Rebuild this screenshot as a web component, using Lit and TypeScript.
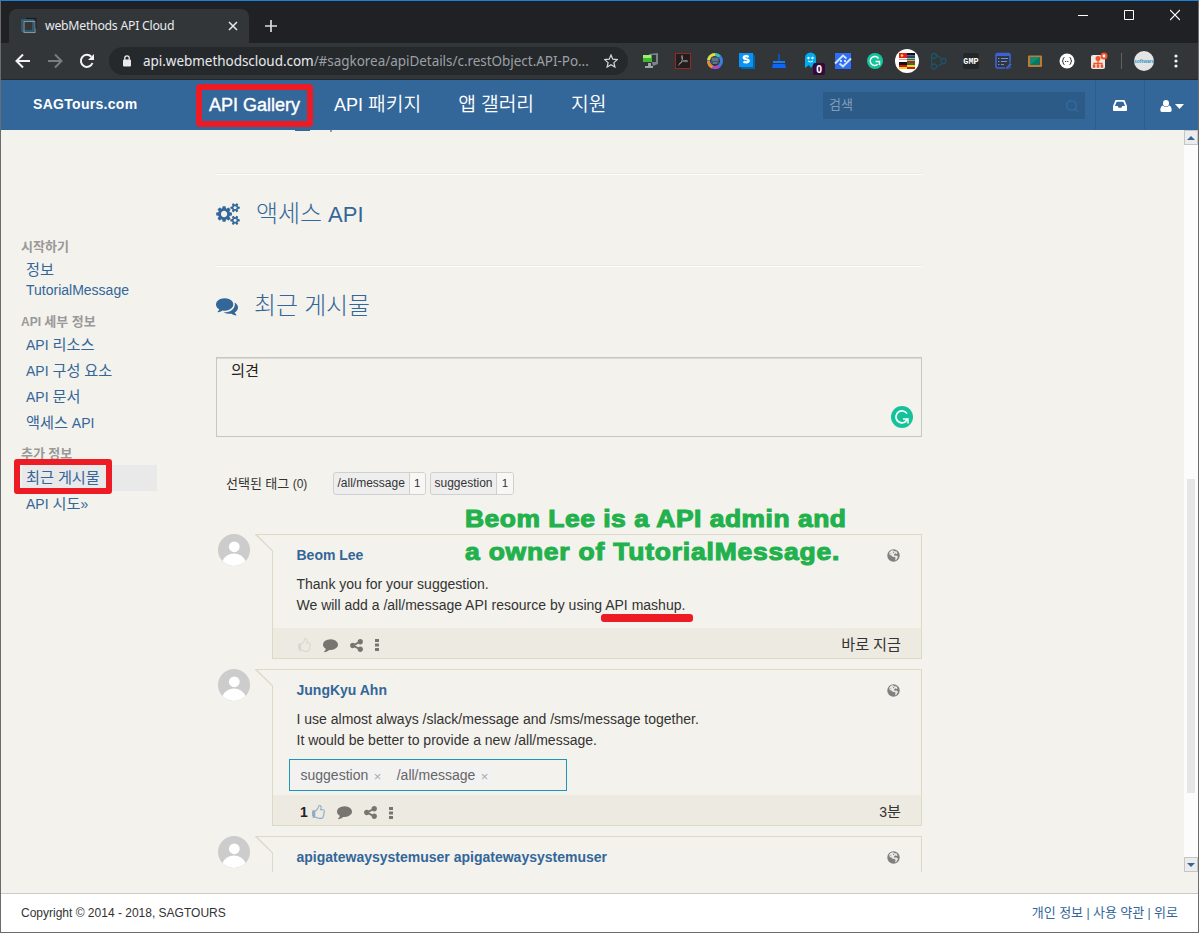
import { LitElement, html, svg, css, nothing } from "lit";
import { customElement, property } from "lit/decorators.js";

// Hangul runs get their own span so they can be sized independently of the Latin face.
const t = (s: string) =>
  s.split(/([\uac00-\ud7a3]+)/).map((p) => (/[\uac00-\ud7a3]/.test(p) ? html`<span class="k">${p}</span>` : p));

const shared = css`
  * { box-sizing: border-box; }
  svg { display: block; flex: none; }
  .k { font-family: "Noto Sans CJK KR", sans-serif; font-size: 1.087em; line-height: 0; }
`;

const FA = {
  cogs: "M896 896q0-106-75-181t-181-75-181 75-75 181 75 181 181 75 181-75 75-181zm768 512q0-52-38-90t-90-38-90 38-38 90q0 53 37.5 90.5t90.5 37.5 90.5-37.5 37.5-90.5zm0-1024q0-52-38-90t-90-38-90 38-38 90q0 53 37.5 90.5t90.5 37.5 90.5-37.5 37.5-90.5zm-384 421v185q0 10-7 19.5t-16 10.5l-155 24q-11 35-32 76 34 48 90 115 7 11 7 20 0 12-7 19-23 30-82.5 89.5t-78.5 59.5q-11 0-21-7l-115-90q-37 19-77 31-11 108-23 155-7 24-30 24h-186q-11 0-20-7.5t-10-17.5l-23-153q-34-10-75-31l-118 89q-7 7-20 7-11 0-21-8-144-133-144-160 0-9 7-19 10-14 41-53t47-61q-23-44-35-82l-152-24q-10-1-17-9.5t-7-19.5v-185q0-10 7-19.5t16-10.5l155-24q11-35 32-76-34-48-90-115-7-11-7-20 0-12 7-20 22-30 82-89t79-59q11 0 21 7l115 90q34-18 77-32 11-108 23-154 7-24 30-24h186q11 0 20 7.5t10 17.5l23 153q34 10 75 31l118-89q8-7 20-7 11 0 21 8 144 133 144 160 0 8-7 19-12 16-42 54t-45 60q23 48 34 82l152 23q10 2 17 10.5t7 19.5zm640 533v140q0 16-149 31-12 27-30 52 51 113 51 138 0 4-4 7-122 71-124 71-8 0-46-47t-52-68q-20 2-30 2t-30-2q-14 21-52 68t-46 47q-2 0-124-71-4-3-4-7 0-25 51-138-18-25-30-52-149-15-149-31v-140q0-16 149-31 13-29 30-52-51-113-51-138 0-4 4-7 4-2 35-20t59-34 30-16q8 0 46 46.5t52 67.5q20-2 30-2t30 2q51-71 92-112l6-2q4 0 124 70 4 3 4 7 0 25-51 138 17 23 30 52 149 15 149 31zm0-1024v140q0 16-149 31-12 27-30 52 51 113 51 138 0 4-4 7-122 71-124 71-8 0-46-47t-52-68q-20 2-30 2t-30-2q-14 21-52 68t-46 47q-2 0-124-71-4-3-4-7 0-25 51-138-18-25-30-52-149-15-149-31v-140q0-16 149-31 13-29 30-52-51-113-51-138 0-4 4-7 4-2 35-20t59-34 30-16q8 0 46 46.5t52 67.5q20-2 30-2t30 2q51-71 92-112l6-2q4 0 124 70 4 3 4 7 0 25-51 138 17 23 30 52 149 15 149 31z",
  comments: "M1408 768q0 139-94 257t-256.5 186.5-353.5 68.5q-86 0-176-16-124 88-278 128-36 9-86 16h-3q-11 0-20.5-8t-11.5-21q-1-3-1-6.5t.5-6.5 2-6l2.5-5 3.5-5.5 4-5 4.5-5 4-4.5q5-6 23-25t26-29.5 22.5-29 25-38.5 20.5-44q-124-72-195-177t-71-224q0-139 94-257t256.5-186.5 353.5-68.5 353.5 68.5 256.5 186.5 94 257zm384 256q0 120-71 224.5t-195 176.5q10 24 20.5 44t25 38.5 22.5 29 26 29.5 23 25q1 1 4 4.5t4.5 5 4 5 3.5 5.5l2.5 5 2 6 .5 6.5-1 6.5q-3 14-13 22t-22 7q-50-7-86-16-154-40-278-128-90 16-176 16-271 0-472-132 58 4 88 4 161 0 309-45t264-129q125-92 192-212t67-254q0-77-23-152 129 71 204 178t75 230z",
  comment: "M1792 896q0 174-120 321.5t-326 233-450 85.5q-70 0-145-8-198 175-460 242-49 14-114 22-17 2-30.5-9t-17.5-29v-1q-3-4-.5-12t2-10 4.5-9.5l6-9 7-8.5 8-9q7-8 31-34.5t34.5-38 31-39.5 32.5-51 27-59 26-76q-157-89-247.5-220t-90.5-281q0-130 71-248.5t191-204.5 286-136.5 348-50.5q244 0 450 85.5t326 233 120 321.5z",
  share: "M1344 1024q133 0 226.5 93.5t93.5 226.5-93.5 226.5-226.5 93.5-226.5-93.5-93.5-226.5q0-12 2-34l-360-180q-92 86-218 86-133 0-226.5-93.5t-93.5-226.5 93.5-226.5 226.5-93.5q126 0 218 86l360-180q-2-22-2-34 0-133 93.5-226.5t226.5-93.5 226.5 93.5 93.5 226.5-93.5 226.5-226.5 93.5q-126 0-218-86l-360 180q2 22 2 34t-2 34l360 180q92-86 218-86z",
  thumb: "M256 1408q0-26-19-45t-45-19-45 19-19 45 19 45 45 19 45-19 19-45zm1280-640q0-51-39-89.5t-89-38.5h-352q0-58 48-159.5t48-160.5q0-98-32-145t-128-47q-26 26-38 85t-30.5 125.5-59.5 109.5q-22 23-77 91-4 5-23 30t-31.5 41-34.5 42.5-40 44-38.5 35.5-40 27-35.5 9h-32v640h32q13 0 31.5 3t33 6.5 38 11 35 11.5 35.5 12.5 29 10.5q211 73 342 73h121q192 0 192-167 0-26-5-56 30-16 47.5-52.5t17.5-73.5-18-69q53-50 53-119 0-25-10-55.5t-25-47.5q32-1 53.5-47t21.5-81zm128-1q0 89-49 163 9 33 9 69 0 77-38 144 3 21 3 43 0 101-60 178 1 139-85 219.5t-227 80.5h-129q-96 0-189.5-22.5t-216.5-65.5q-116-40-138-40h-288q-53 0-90.5-37.5t-37.5-90.5v-640q0-53 37.5-90.5t90.5-37.5h274q36-24 137-155 58-75 107-128 24-25 35.5-85.5t30.5-126.5 62-108q39-37 90-37 84 0 151 32.5t102 101.5 35 186q0 93-48 192h176q104 0 180 76t76 179z",
};
const fa = (name: keyof typeof FA, w: number, h: number, fill: string, vb = "0 0 1792 1792") =>
  html`<svg width=${w} height=${h} viewBox=${vb} fill=${fill}><path d=${FA[name]}></path></svg>`;

const grammarly = (s: number) => html`<svg width=${s} height=${s} viewBox="0 0 22 22">
  <circle cx="11" cy="11" r="11" fill="#15c39a"></circle>
  <path d="M16 7.6A6 6 0 1 0 15 15.3" fill="none" stroke="#fff" stroke-width="1.7"></path>
  <path d="M12 13h5v4.500" fill="none" stroke="#fff" stroke-width="1.5"></path>
  <path d="M16.5 13.400l-2.500 2.500" stroke="#fff" stroke-width="1.5"></path></svg>`;

const extensions = [
  svg`<path d="M10 5l9-1v11l-5 2z" fill="#78838a"/><path d="M12 6h5v7h-5z" fill="#30373a"/><path d="M4 6h9v7H4z" fill="#41b92b"/><path d="M4 6h8v3H4z" fill="#9cef7d"/><path d="M9 14h3v3h2v2H6v-2h3z" fill="#9aa9ae"/>`,
  svg`<rect x="4.5" y="4.500" width="15" height="15" fill="#241d1e" stroke="#95291f"/><path d="M7 16.500c2-1 5-5 4.500-9 0-2-1.500-1-1 1 1 3 3.500 5 6 4 1-1.500-3-2-8.500 2.500" fill="none" stroke="#8d8d8d"/>`,
  svg`<circle cx="12" cy="12" r="6.500" fill="none" stroke="#3a7fe0" stroke-width="3"/><path d="M5.500 11a6.500 6.500 0 0 1 6.500-5.500" fill="none" stroke="#e5df2d" stroke-width="3"/><path d="M5.500 12a6.500 6.500 0 0 0 4 6" fill="none" stroke="#f08a24" stroke-width="3"/><path d="M10 18.200a6.500 6.500 0 0 0 6-1" fill="none" stroke="#b743c6" stroke-width="3"/><path d="M12 5.500a6 6 0 0 1 4.500 2" fill="none" stroke="#3fc1b0" stroke-width="3"/><rect x="8" y="8" width="8" height="7" rx="1" fill="#40566c"/><path d="M10 9v3M12 9v3M14 9v3M10 14h4" fill="none" stroke="#7d93a8"/>`,
  svg`<path d="M4 4h13l3 3v13H7l-3-3z" fill="#0663a8"/><path d="M4 4h14v14H4z" fill="#0a93f5"/><path d="M13.700 7.900c-2-1.200-5-.8-5 .7 0 2 5 1.300 5 3.200 0 1.800-3.500 1.900-5.200.7" fill="none" stroke="#fff" stroke-width="2.300"/>`,
  svg`<path d="M11.300 5h1.500v7h-1.500z" fill="#0a5bd0"/><path d="M6 12h12v2H6z" fill="#0a84ff"/><path d="M6 15h12l1 4H5z" fill="#0a66ff"/>`,
  svg`<path d="M6 18V9a5.500 5.500 0 0 1 11 0v9l-3-2-2 3-2-3-4 3z" fill="#00aef0"/><circle cx="9.500" cy="9" r="1.200" fill="#fff"/><circle cx="13.500" cy="9" r="1.200" fill="#fff"/><path d="M9 12q2.500 2 5 0" fill="none" stroke="#fff"/>`,
  svg`<rect x="4" y="4" width="16" height="16" fill="#2f6df2"/><path d="M4 14.500L12 6.500l3.500 3M20 9.500l-8 8-3.500-3" fill="none" stroke="#cfe2ff" stroke-width="2"/><circle cx="10" cy="12" r="1" fill="#fff"/><circle cx="14" cy="12" r="1" fill="#fff"/>`,
  svg`<circle cx="12" cy="12" r="8" fill="#15c39a"/><path d="M15.500 9.500a4.500 4.500 0 1 0-.8 5.800M12.500 12.500h4v3.500" fill="none" stroke="#fff" stroke-width="1.500"/>`,
  svg`<circle cx="12" cy="12" r="12" fill="#fff"/><path d="M4 4h8v8H4z" fill="#de1f1f"/><path d="M12 4h8v2.500h-8z" fill="#111"/><path d="M12 6.500h8V9h-8z" fill="#31407a"/><path d="M4 9h8v1H4zM4 10.500h8V12H4z" fill="#fff"/><circle cx="7" cy="6.500" r="1.300" fill="#ffd83a"/><path d="M12 9.500h8v2h-8z" fill="#1d7f2d"/><path d="M4 13h8v3H4z" fill="#111"/><path d="M4 16h8v2H4z" fill="#dd1111"/><path d="M4 18h8v2H4z" fill="#ffd31a"/><path d="M12 12h8v2h-8zM12 18h8v2h-8z" fill="#c41d1d"/><path d="M12 14h8v2h-8z" fill="#1d7f2d"/><path d="M12 16h8v2h-8z" fill="#ffd31a"/>`,
  svg`<g fill="none" stroke="#1f5266" stroke-width="1.300"><circle cx="7" cy="7" r="2.500"/><circle cx="16.500" cy="12" r="2.500"/><circle cx="7" cy="17.500" r="2.500"/><path d="M4.600 6v11M9.500 6l5.500 4M9.500 18l6-3.500M4.600 8.500v8"/></g>`,
  svg`<rect x="4" y="4" width="16" height="16" rx="2" fill="#23272a"/><text x="12" y="14.800" text-anchor="middle" font-family="Liberation Mono" font-weight="700" font-size="8.500" fill="#fff">GMP</text>`,
  svg`<rect x="5" y="4.500" width="14" height="14.500" rx="1.500" fill="none" stroke="#3b63d9" stroke-width="1.600"/><path d="M5 6h14" stroke="#3b63d9" stroke-width="2"/><path d="M7 9.500h1.500M7 12.500h1.500M7 15.500h1.500M10 9.500h7M10 12.500h6M10 15.500h3" stroke="#6c8cf0"/><path d="M14 19.500l5-6 2 2-5 5z" fill="#3b63d9" stroke="#323639" stroke-width=".8"/>`,
  svg`<rect x="5" y="6.500" width="14" height="11.500" rx="1" fill="#c27a33"/><rect x="7" y="8" width="10" height="8" fill="#0e8d76"/><path d="M7 16l10-8v8z" fill="#0a7562"/>`,
  svg`<circle cx="12" cy="12" r="7.500" fill="#fff"/><path d="M9.500 8.500q-1.500 0-1.300 1.700 0 1.800-1.200 1.800 1.200 0 1.200 1.800-.2 1.700 1.300 1.700M14.500 8.500q1.500 0 1.300 1.700 0 1.800 1.200 1.800-1.200 0-1.200 1.800.2 1.700-1.300 1.700" fill="none" stroke="#333"/><path d="M10 12.500h4" stroke="#333" stroke-dasharray="1 .8"/>`,
  svg`<rect x="4" y="6" width="14" height="14" rx="2" fill="#efe9e4"/><circle cx="11" cy="9.500" r="2.500" fill="#f0542d"/><path d="M11 11v6M7 17.500v-3h8v3" stroke="#f0542d" stroke-width="1.300" fill="none"/><path d="M5.800 16h2.600v2.800H5.800zM9.700 16h2.600v2.800H9.700zM13.600 16h2.600v2.800h-2.600z" fill="#f0542d"/><circle cx="17" cy="7" r="3.500" fill="#f0542d"/><circle cx="17" cy="7" r="1.400" fill="#fff"/>`,
];

@customElement("browser-chrome")
export class BrowserChrome extends LitElement {
  static styles = [shared, css`
    :host { display: block; color: #e8eaed; font: 12px/20px "Noto Sans", sans-serif; }
    .strip { display: flex; height: 42px; background: #202124; padding: 8px 0 0 8px; }
    .tab { display: flex; align-items: center; width: 240px; height: 34px; background: #323639; border-radius: 8px 8px 0 0; padding: 0 11px 0 12px; }
    .title { margin-left: 8px; flex: 1; font-size: 12.300px; letter-spacing: -.27px; }
    .plus { margin: 10px 0 0 16px; }
    .wins { display: flex; gap: 36px; margin: 0 18px 0 auto; }
    .bar { display: flex; align-items: center; height: 37px; background: #323639; border-bottom: 1px solid #23282d; padding-left: 14px; }
    .nav { display: flex; gap: 16px; }
    .url { display: flex; align-items: center; margin-left: 14px; width: 519px; height: 28px; border-radius: 14px; background: #26292c; padding: 0 10px 0 13px; }
    .addr { flex: 1; margin-left: 11px; font-size: 13.500px; letter-spacing: -.04px; color: #9aa0a6; white-space: nowrap; }
    .addr b { color: #e8eaed; font-weight: 400; }
    .exts { display: flex; margin-left: 7px; }
    .ext { position: relative; display: flex; justify-content: center; width: 32px; }
    .badge { position: absolute; left: 18px; top: 14px; width: 12px; height: 12px; border-radius: 2px; background: #35083c; color: #fff; font: 700 10px/12px "Noto Sans", sans-serif; text-align: center; }
    .sep { width: 1px; height: 16px; background: #5f6368; margin: 0 12px 0 6px; }
    .me { display: grid; place-items: center; width: 20px; height: 20px; border-radius: 50%; background: #e4e4e4; color: #2e94c4; font: 700 5px/5px "Liberation Sans", sans-serif; overflow: hidden; }
    .more { margin-left: 20px; }
  `];
  render() {
    return html`
      <div class="strip">
        <div class="tab">
          <svg width="16" height="16" viewBox="0 0 16 16" fill="none"><rect x="1" y="2" width="11" height="11" stroke="#2c6c91" stroke-width="1.300"></rect><rect x="3" y="3.500" width="11" height="11" stroke="#8c9297" stroke-width="1.100"></rect><path d="M5 .5h10v10" stroke="#15181a"></path></svg>
          <span class="title">webMethods API Cloud</span>
          <svg width="10" height="10" viewBox="0 0 10 10"><path d="M1 1l8 8M9 1L1 9" stroke="#e8eaed" stroke-width="1.500"></path></svg>
        </div>
        <svg class="plus" width="12" height="14" viewBox="0 0 12 14"><path d="M6 1v12M0 7h12" stroke="#dadce0" stroke-width="1.700"></path></svg>
        <div class="wins">
          <svg width="10" height="12" viewBox="0 0 10 12"><path d="M0 6.500h10" stroke="#fff"></path></svg>
          <svg width="10" height="12" viewBox="0 0 10 12"><path d="M.5 1.500h9v9h-9z" stroke="#fff" fill="none"></path></svg>
          <svg width="10" height="12" viewBox="0 0 10 12"><path d="M0 1l10 10M10 1L0 11" stroke="#fff" stroke-width="1.200"></path></svg>
        </div>
      </div>
      <div class="bar">
        <div class="nav">
          <svg width="16" height="16" viewBox="0 0 16 16" fill="none" stroke="#f1f3f4" stroke-width="2"><path d="M15 8H2M8 1.500L1.500 8 8 14.500"></path></svg>
          <svg width="16" height="16" viewBox="0 0 16 16" fill="none" stroke="#7a7d80" stroke-width="2"><path d="M1 8h13M8 1.500L14.500 8 8 14.500"></path></svg>
          <svg width="16" height="16" viewBox="0 0 16 16"><path d="M13.500 10A6 6 0 1 1 12.300 3.800" fill="none" stroke="#f1f3f4" stroke-width="2"></path><path d="M15 1v6H9z" fill="#f1f3f4"></path></svg>
        </div>
        <div class="url">
          <svg width="10" height="12" viewBox="0 0 10 12"><rect x="1" y="4.500" width="8" height="7" rx="1" fill="#e8eaed"></rect><path d="M2.800 5V3a2.200 2.200 0 0 1 4.400 0v2" fill="none" stroke="#e8eaed" stroke-width="1.300"></path></svg>
          <span class="addr"><b>api.webmethodscloud.com</b>/#sagkorea/apiDetails/c.restObject.API-Po...</span>
          <svg width="14" height="14" viewBox="0 0 14 14"><path d="M7 1l1.800 4.200 4.500.4-3.400 3 1 4.400L7 10.700 3.100 13l1-4.400-3.400-3 4.500-.4z" fill="none" stroke="#d5d7d9" stroke-width="1.200"></path></svg>
        </div>
        <div class="exts">
          ${extensions.map((g, i) => html`<div class="ext"><svg width="24" height="24" viewBox="0 0 24 24">${g}</svg>${i === 5 ? html`<span class="badge">0</span>` : nothing}</div>`)}
        </div>
        <div class="sep"></div>
        <div class="me">software</div>
        <svg class="more" width="4" height="14" viewBox="0 0 4 14" fill="#f1f3f4"><circle cx="2" cy="2" r="1.600"></circle><circle cx="2" cy="7" r="1.600"></circle><circle cx="2" cy="12" r="1.600"></circle></svg>
      </div>`;
  }
}

@customElement("site-header")
export class SiteHeader extends LitElement {
  static styles = [shared, css`
    :host { display: flex; height: 50px; background: #336699; color: #fff; font: 18px/50px "Liberation Sans", sans-serif; }
    .brand { width: 163px; padding-left: 32px; font-size: 14px; line-height: 49px; font-weight: 700; letter-spacing: .3px; }
    nav { display: flex; gap: 37px; padding-left: 45px; white-space: nowrap; }
    nav .k { font-size: 1.070em; font-weight: 350; }
    .item { position: relative; }
    .item.on { -webkit-text-stroke: .4px #fff; margin-right: -3px; }
    .mark { position: absolute; left: -13px; top: 4px; width: 117px; height: 43px; border: 6px solid #ed1c24; border-radius: 4px; }
    .search { display: flex; align-items: center; margin: 12px 10px 0 auto; width: 262px; height: 27px; background: #2d5b88; color: #7f9dbb; padding: 0 6px; font-size: 12px; line-height: 27px; }
    .search svg { margin-left: auto; }
    .cell { display: flex; align-items: center; justify-content: center; gap: 3px; border-left: 1px solid #2d5d8c; width: 49px; height: 50px; }
    .cell.user { width: 54px; padding-top: 2px; }
  `];
  render() {
    return html`
      <div class="brand">SAGTours.com</div>
      <nav>
        <span class="item on">API Gallery<span class="mark"></span></span>
        <span class="item">${t("API 패키지")}</span>
        <span class="item">${t("앱 갤러리")}</span>
        <span class="item">${t("지원")}</span>
      </nav>
      <div class="search"><span>${t("검색")}</span><svg width="14" height="14" viewBox="0 0 14 14" fill="none" stroke="#336a9f" stroke-width="1.500"><circle cx="6.500" cy="6.500" r="4.800"></circle><path d="M9.500 9.500l3.500 3"></path></svg></div>
      <div class="cell"><svg width="14" height="11" viewBox="0 0 14 11"><path fill="#fff" fill-rule="evenodd" d="M2.500 0h9L14 6v4.300q0 .7-.7.700H.7Q0 11 0 10.300V6zM3.700 1.800L2 6h2.700l.9 1.700h2.800L9.300 6H12l-1.700-4.200z"></path></svg></div>
      <div class="cell user">
        <svg width="12" height="12" viewBox="0 0 12 12" fill="#fff"><ellipse cx="6" cy="3.300" rx="3" ry="3.300"></ellipse><path d="M2.800 5.500Q.5 6.200.3 10q0 2 1.700 2h8q1.700 0 1.700-2-.2-3.800-2.500-4.500Q6 8.500 2.800 5.500z"></path></svg>
        <svg width="9" height="5" viewBox="0 0 9 5" fill="#fff"><path d="M0 0h9L4.500 5z"></path></svg>
      </div>`;
  }
}

@customElement("side-nav")
export class SideNav extends LitElement {
  static styles = [shared, css`
    :host { display: block; width: 156px; padding: 107px 0 0 20px; font: 14px/20px "Liberation Sans", sans-serif; color: #336699; flex: none; white-space: nowrap; }
    .head { font-size: 12px; font-weight: 700; color: #999; height: 20px; }
    .link { padding-left: 5px; height: 26px; line-height: 26px; }
    .link.name { height: 29px; line-height: 14px; }
    .more { margin-top: 8px; height: 21px; }
    .active { position: relative; background: #e9e9e9; margin-left: 1px; padding-left: 4px; }
    .mark { position: absolute; left: -8px; top: -6px; width: 98px; height: 35px; border: 6px solid #ed1c24; border-radius: 3px; }
  `];
  render() {
    return html`
      <div class="head">${t("시작하기")}</div>
      <div class="link">${t("정보")}</div>
      <div class="link name">TutorialMessage</div>
      <div class="head">${t("API 세부 정보")}</div>
      <div class="link">${t("API 리소스")}</div>
      <div class="link">${t("API 구성 요소")}</div>
      <div class="link">${t("API 문서")}</div>
      <div class="link">${t("액세스 API")}</div>
      <div class="head more">${t("추가 정보")}</div>
      <div class="link active">${t("최근 게시물")}<span class="mark"></span></div>
      <div class="link">${t("API 시도»")}</div>`;
  }
}

@customElement("post-card")
export class PostCard extends LitElement {
  @property() name = "";
  @property() time = "";
  @property({ type: Array }) lines: string[] = [];
  @property({ type: Array }) tags: string[] = [];
  @property({ type: Number }) likes = 0;
  static styles = [shared, css`
    :host { display: flex; font: 14px/21px "Liberation Sans", sans-serif; color: #333; margin-bottom: 10px; }
    .avatar { margin-left: 2px; }
    .tail { margin-left: 5px; margin-right: -1px; }
    .rail { width: 1px; margin: 17px -1px 0 0; background: #ded9c7; }
    .card { flex: 1; min-width: 0; min-height: 60px; border-right: 1px solid #ded9c7; border-top: 1px solid #ded9c7; }
    .card.done { border-bottom: 1px solid #ded9c7; }
    .inner { padding: 10px 20px 0 24.500px; }
    .top { display: flex; align-items: center; justify-content: space-between; height: 21px; color: #336699; font-weight: 700; padding-right: 1.500px; }
    .body { padding-top: 8px; white-space: nowrap; }
    .line { height: 21px; }
    .under { position: relative; }
    .stroke { position: absolute; left: -4.500px; top: 17px; width: 92px; height: 8px; background: #ed1c24; border-radius: 3px; }
    .tags { display: flex; gap: 5px; width: 278px; height: 32px; border: 1px solid #1b95bd; margin: 8px 0 0 -7.500px; padding: 5px 5px 5px 4.500px; color: #666; }
    .chip { display: flex; height: 20px; line-height: 20px; background: #f2f2f2; padding: 0 5px 0 6px; border-radius: 2px; }
    .x { margin-left: 5.500px; width: 7px; color: #aaa; font-size: 13px; line-height: 23px; }
    .foot { display: flex; align-items: center; height: 30px; background: #edeae1; margin: 12px 0 0 1px; padding: 4px 20px 0 24px; }
    .foot.tagged { margin-top: 4px; padding-left: 27px; }
    .n { color: #222; font-weight: 700; font-size: 14px; margin-right: 3px; }
    .foot svg + svg { margin-left: 11px; }
    .tagged svg { margin-top: 1px; }
    .time { margin-left: auto; }
  `];
  render() {
    const globe = html`<svg width="13" height="13" viewBox="0 0 13 13"><circle cx="6.500" cy="6.500" r="6.200" fill="#808080"></circle><path d="M2.200 3.400L4.300 1.500 6.200 1.200 7.300 2.200 9.400 2.300 10.600 4.200 9.600 5 8.300 4.300 7 5.600 7.600 6.800 9.500 6.500 11 7.800 9.800 10.200 8 11.400 8.600 9 7.300 7.800 5.900 7.900 4.300 6.600 2.700 6z" fill="#ece9e3"></path><path d="M5.800 2.600L7.400 3.200 6.200 4.300zM3 4.500L4 4.200 4.400 5.200z" fill="#808080"></path></svg>`;
    return html`
      <svg class="avatar" width="32" height="32" viewBox="0 0 32 32"><circle cx="16" cy="16" r="16" fill="#ccc"></circle><circle cx="16.300" cy="12.800" r="5.400" fill="#fff"></circle><path d="M4.500 27Q8 19.500 16 19.500T27.500 27A16 16 0 0 1 4.500 27z" fill="#fff"></path></svg>
      <svg class="tail" width="18" height="18" viewBox="0 0 18 18"><path d="M0 0h18v1H2.500L18 16.500V18h-1v-.7L0 .8z" fill="#ded9c7"></path></svg>
      <div class="rail"></div>
      <div class="card ${this.time ? "done" : ""}">
        <div class="inner">
          <div class="top"><span>${this.name}</span>${globe}</div>
          ${this.lines.length ? html`<div class="body">
            ${this.lines.map((l) => {
              const [a, b] = l.split("|");
              return html`<div class="line">${a}${b ? html`<span class="under">${b}<span class="stroke"></span></span>` : nothing}</div>`;
            })}
            ${this.tags.length ? html`<div class="tags">${this.tags.map((g) => html`<span class="chip">${g}<span class="x">×</span></span>`)}</div>` : nothing}
          </div>` : nothing}
        </div>
        ${this.time ? html`<div class="foot ${this.tags.length ? "tagged" : ""}">
          ${this.likes ? html`<span class="n">${this.likes}</span>` : nothing}
          ${fa("thumb", 15, 15, this.likes ? "#8fabc8" : "#d9d7d1")}
          ${fa("comment", 15, 15, "#777570", "0 100 1792 1792")}
          ${fa("share", 15, 15, "#777570")}
          <svg width="4" height="14" viewBox="0 0 4 14" fill="#777570"><path d="M0 1h4v3H0zM0 5.500h4v3H0zM0 10h4v3H0z"></path></svg>
          <span class="time">${t(this.time)}</span>
        </div>` : nothing}
      </div>`;
  }
}

@customElement("app-root")
export class AppRoot extends LitElement {
  static styles = [shared, css`
    :host { display: flex; flex-direction: column; box-sizing: border-box; width: 1199px; height: 933px; overflow: hidden; border: 1px solid #6b6b6b; border-top-color: #1883d7; background: #f4f2ec; font: 14px/20px "Liberation Sans", sans-serif; color: #333; }
    .view { display: flex; height: 742px; overflow: hidden; }
    main { position: relative; width: 706px; margin-left: 59px; }
    .cut { display: flex; gap: 20px; height: 43px; padding-left: 79px; }
    .cut i { width: 15px; height: 1px; background: #336699; }
    .cut i.p { width: 2px; height: 2px; background: #8e9bb8; }
    .rule { height: 2px; background: #fff; border-top: 1px solid #ebe9e3; }
    h2 { display: flex; align-items: center; height: 90px; margin: 0; font-size: 22px; font-weight: 400; line-height: 40px; color: #336699; padding-bottom: 12px; }
    h2 .k { font-weight: 300; }
    h2 .txt { margin-left: 16px; padding-top: 2px; white-space: pre; }
    .msg { display: flex; justify-content: space-between; height: 80px; border: 1px solid #c6c6c3; box-shadow: inset 0 1px #dcdad6; padding: 3px 8px 0 14px; color: #222; }
    .msg svg { align-self: flex-end; margin-bottom: 8px; }
    .filter { display: flex; align-items: center; height: 23px; margin: 35px 0 39px 10px; font-size: 12px; }
    .label { width: 107px; }
    .tag { display: flex; height: 23px; line-height: 21px; border: 1px solid #d0d0d0; border-radius: 3px; background: #eee; margin-right: 4px; overflow: hidden; white-space: nowrap; }
    .tag b { font-weight: 400; padding: 0 3.800px 0 3.500px; border-right: 1px solid #d0d0d0; }
    .tag i { font-style: normal; background: #f8f7f4; width: 15.300px; text-align: center; font-size: 11.500px; }
    .note { position: absolute; left: 249px; top: 372px; font: 700 24px/33px "Liberation Sans", sans-serif; letter-spacing: .480px; transform: scaleX(1.1); transform-origin: 0 0; -webkit-text-stroke: 1.100px #22b14c; color: #22b14c; white-space: nowrap; }
    .note .second { letter-spacing: .740px; }
    .scroll { display: flex; flex-direction: column; align-items: center; margin-left: auto; width: 14px; background: #fcfcfc; }
    .btn { display: grid; place-items: center; width: 14px; height: 15px; border: 1px solid #c6c6c6; background: #ececec; flex: none; }
    .thumb { width: 8px; height: 314px; background: #e6e6e6; margin: 334px 0 auto; }
    .foot { display: flex; justify-content: space-between; margin-top: 21px; height: 39px; border-top: 1px solid #ccccc4; background: #fff; padding: 0 20px; font-size: 12px; line-height: 38px; }
    .legal { color: #336699; }
  `];
  render() {
    return html`
      <browser-chrome></browser-chrome>
      <site-header></site-header>
      <div class="view">
        <side-nav></side-nav>
        <main>
          <div class="cut"><i></i><i class="p"></i></div>
          <div class="rule"></div>
          <h2>${fa("cogs", 24, 22, "#336699", "0 0 1920 1792")}<span class="txt">${t("액세스 API")}</span></h2>
          <div class="rule"></div>
          <h2>${fa("comments", 22, 22, "#336699")}<span class="txt">${t("최근 게시물")}</span></h2>
          <div class="msg"><span>${t("의견")}</span>${grammarly(22)}</div>
          <div class="filter">
            <span class="label">${t("선택된 태그 (0)")}</span>
            <span class="tag"><b>/all/message</b><i>1</i></span>
            <span class="tag"><b>suggestion</b><i>1</i></span>
          </div>
          <post-card name="Beom Lee" time="바로 지금" .lines=${["Thank you for your suggestion.", "We will add a /all/message API resource by using |API mashup."]}></post-card>
          <post-card name="JungKyu Ahn" time="3분" .likes=${1} .tags=${["suggestion", "/all/message"]} .lines=${["I use almost always /slack/message and /sms/message together.", "It would be better to provide a new /all/message."]}></post-card>
          <post-card name="apigatewaysystemuser apigatewaysystemuser"></post-card>
          <div class="note">Beom Lee is a API admin and<br /><span class="second">a owner of TutorialMessage.</span></div>
        </main>
        <div class="scroll">
          <div class="btn"><svg width="8" height="4" viewBox="0 0 8 4" fill="#336699"><path d="M4 0l4 4H0z"></path></svg></div>
          <div class="thumb"></div>
          <div class="btn"><svg width="8" height="4" viewBox="0 0 8 4" fill="#336699"><path d="M0 0h8L4 4z"></path></svg></div>
        </div>
      </div>
      <div class="foot"><span>Copyright © 2014 - 2018, SAGTOURS</span><span class="legal">${t("개인 정보 | 사용 약관 | 위로")}</span></div>`;
  }
}
